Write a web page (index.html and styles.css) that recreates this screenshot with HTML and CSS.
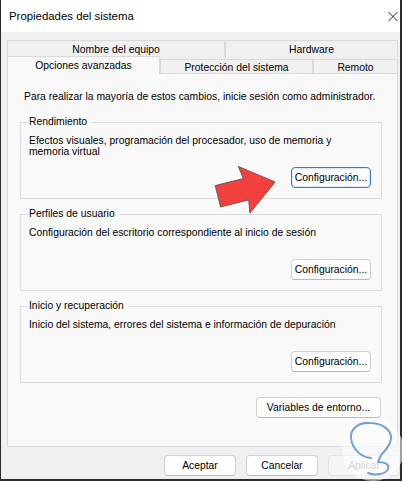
FILE: index.html
```html
<!DOCTYPE html>
<html lang="es">
<head>
    <meta charset="UTF-8">
    <meta name="viewport" content="width=device-width, initial-scale=1.0">
    <title>Propiedades del sistema</title>
    <link rel="stylesheet" href="styles.css">
</head>
<body>
    <div class="window">
        <header class="titlebar">
            <span class="title">Propiedades del sistema</span>
            <svg class="close-icon" viewBox="0 0 10 10" fill="none" stroke="currentColor" stroke-width="1">
                <path d="M0.5 0.5L9.5 9.5M9.5 0.5L0.5 9.5"/>
            </svg>
        </header>

        <div class="dialog-body">
            <div class="tabs">
                <div class="tab-row back">
                    <div class="tab tab-name">Nombre del equipo</div>
                    <div class="tab tab-hardware">Hardware</div>
                </div>
                <div class="tab-row front">
                    <div class="tab tab-advanced active">Opciones avanzadas</div>
                    <div class="tab tab-protection">Protección del sistema</div>
                    <div class="tab tab-remote">Remoto</div>
                </div>
            </div>

            <main class="panel">
                <p class="intro">Para realizar la mayoría de estos cambios, inicie sesión como administrador.</p>

                <fieldset class="group">
                    <legend>Rendimiento</legend>
                    <div class="group-body">
                        <p class="group-text">Efectos visuales, programación del procesador, uso de memoria y memoria virtual</p>
                        <button class="btn btn-config focused">Configuración...</button>
                    </div>
                </fieldset>

                <fieldset class="group">
                    <legend>Perfiles de usuario</legend>
                    <div class="group-body">
                        <p class="group-text">Configuración del escritorio correspondiente al inicio de sesión</p>
                        <button class="btn btn-config">Configuración...</button>
                    </div>
                </fieldset>

                <fieldset class="group">
                    <legend>Inicio y recuperación</legend>
                    <div class="group-body">
                        <p class="group-text">Inicio del sistema, errores del sistema e información de depuración</p>
                        <button class="btn btn-config">Configuración...</button>
                    </div>
                </fieldset>

                <div class="env-row">
                    <button class="btn btn-env">Variables de entorno...</button>
                </div>
            </main>

            <footer class="footer">
                <button class="btn btn-footer">Aceptar</button>
                <button class="btn btn-footer">Cancelar</button>
                <button class="btn btn-footer" disabled>Aplicar</button>
            </footer>
        </div>

        <svg class="overlay" viewBox="0 0 403 483">
            <!-- red pointer arrow -->
            <polygon class="arrow" transform="translate(247 189) rotate(-14)"
                points="-30,-11 -1,-11 -3,-24 29,0 -3,24 -1,11 -30,11"/>
            <!-- watermark -->
            <circle class="mark-bg" cx="373" cy="450" r="31"/>
            <path class="mark" d="M371 458 C360 457 352 448 351 438 C350 428 360 422 370 423 C382 423 392 430 391 439 C390 446 385 451 381 455 L378 462 C384 462 390 464 388 469 C386 474 376 476 368 473"/>
        </svg>
    </div>
</body>
</html>
```

FILE: styles.css
```css
* {
    margin: 0;
    padding: 0;
    box-sizing: border-box;
}

body {
    font-family: 'Liberation Sans', Arial, sans-serif;
    font-size: 10.35px;
    line-height: 12px;
    color: #000;
    background-color: #FFFFFF;
}

.window {
    position: relative;
    width: 402px;
    height: 481px;
    display: flex;
    flex-direction: column;
    background-color: #F0F0F0;
    border-left: 1px solid #2B2B2B;
    border-right: 2px solid #2B2B2B;
    border-bottom: 2px solid #2B2B2B;
}

.titlebar {
    height: 32px;
    background-color: #FFFFFF;
    display: flex;
    align-items: center;
    justify-content: space-between;
    padding: 0 2px 0 8px;
}

.title {
    font-size: 11.4px;
}

.close-icon {
    width: 10px;
    height: 11px;
    color: #222;
}

.dialog-body {
    flex: 1;
    display: flex;
    flex-direction: column;
    padding: 8px 0 0 6px;
}

/* tabs */
.tab-row {
    display: flex;
    height: 17px;
}

.tab-row.front {
    height: 16px;
    align-items: flex-end;
}

.tab {
    height: 17px;
    text-align: center;
    padding-top: 3px;
    background-color: #F0F0F0;
    border: 1px solid #D9D9D9;
    border-bottom: none;
    white-space: nowrap;
}

.tab-name { width: 218px; }
.tab-hardware { width: 173px; }
.tab-advanced { width: 153px; }
.tab-protection { width: 153px; }
.tab-remote { width: 85px; }

.tab-row.front .tab {
    height: 14px;
    padding-top: 2px;
}

.tab-row.front .tab.active {
    height: 18px;
    margin-bottom: -1px;
    padding-top: 3px;
    background-color: #F9F9F9;
    position: relative;
    z-index: 1;
}

/* panel */
.panel {
    width: 391px;
    height: 374px;
    background-color: #F9F9F9;
    border: 1px solid #D9D9D9;
    padding: 17px 15px 0 12px;
}

.intro {
    padding-left: 4px;
    margin-bottom: 13px;
    white-space: nowrap;
}

.group {
    border: 1px solid #DCDCDC;
    padding: 7px 10px 10px 8px;
}

.group + .group {
    margin-top: 9px;
}

.group legend {
    margin-left: -1px;
    padding: 0 4px 0 1px;
    line-height: 12px;
}

.group-body {
    height: 53px;
    display: flex;
    flex-direction: column;
    justify-content: space-between;
    align-items: flex-end;
}

.group-text {
    align-self: stretch;
    line-height: 11px;
}

/* buttons */
.btn {
    font-family: inherit;
    font-size: 10.35px;
    color: #000;
    height: 21px;
    background-color: #FDFDFD;
    border: 1px solid #D0D0D0;
    border-bottom-color: #BABABA;
    border-radius: 4px;
    white-space: nowrap;
}

.btn-config {
    width: 80px;
}

.btn.focused {
    border: 1px solid #3A7FCF;
    box-shadow: inset 0 0 0 1px #D6E6F7;
}

.env-row {
    display: flex;
    justify-content: flex-end;
    margin-top: 14px;
    padding-right: 1px;
}

.btn-env {
    width: 125px;
}

.footer {
    display: flex;
    justify-content: flex-end;
    gap: 10px;
    margin-top: 8px;
}

.btn-footer {
    width: 72px;
}

.btn-footer:disabled {
    color: #A3A3A3;
    background-color: #F5F5F5;
    border-color: #E2E2E2;
}

/* overlay: arrow + watermark */
.overlay {
    position: absolute;
    top: 0;
    left: -1px;
    width: 403px;
    height: 483px;
    pointer-events: none;
}

.arrow {
    fill: #F2403F;
    stroke: #6A4A4A;
    stroke-width: 0.8;
    stroke-linejoin: round;
}

.mark-bg {
    fill: rgba(255, 255, 255, 0.55);
}

.mark {
    fill: none;
    stroke: #6FA4D9;
    stroke-width: 2;
    stroke-linecap: round;
    stroke-linejoin: round;
}
```
